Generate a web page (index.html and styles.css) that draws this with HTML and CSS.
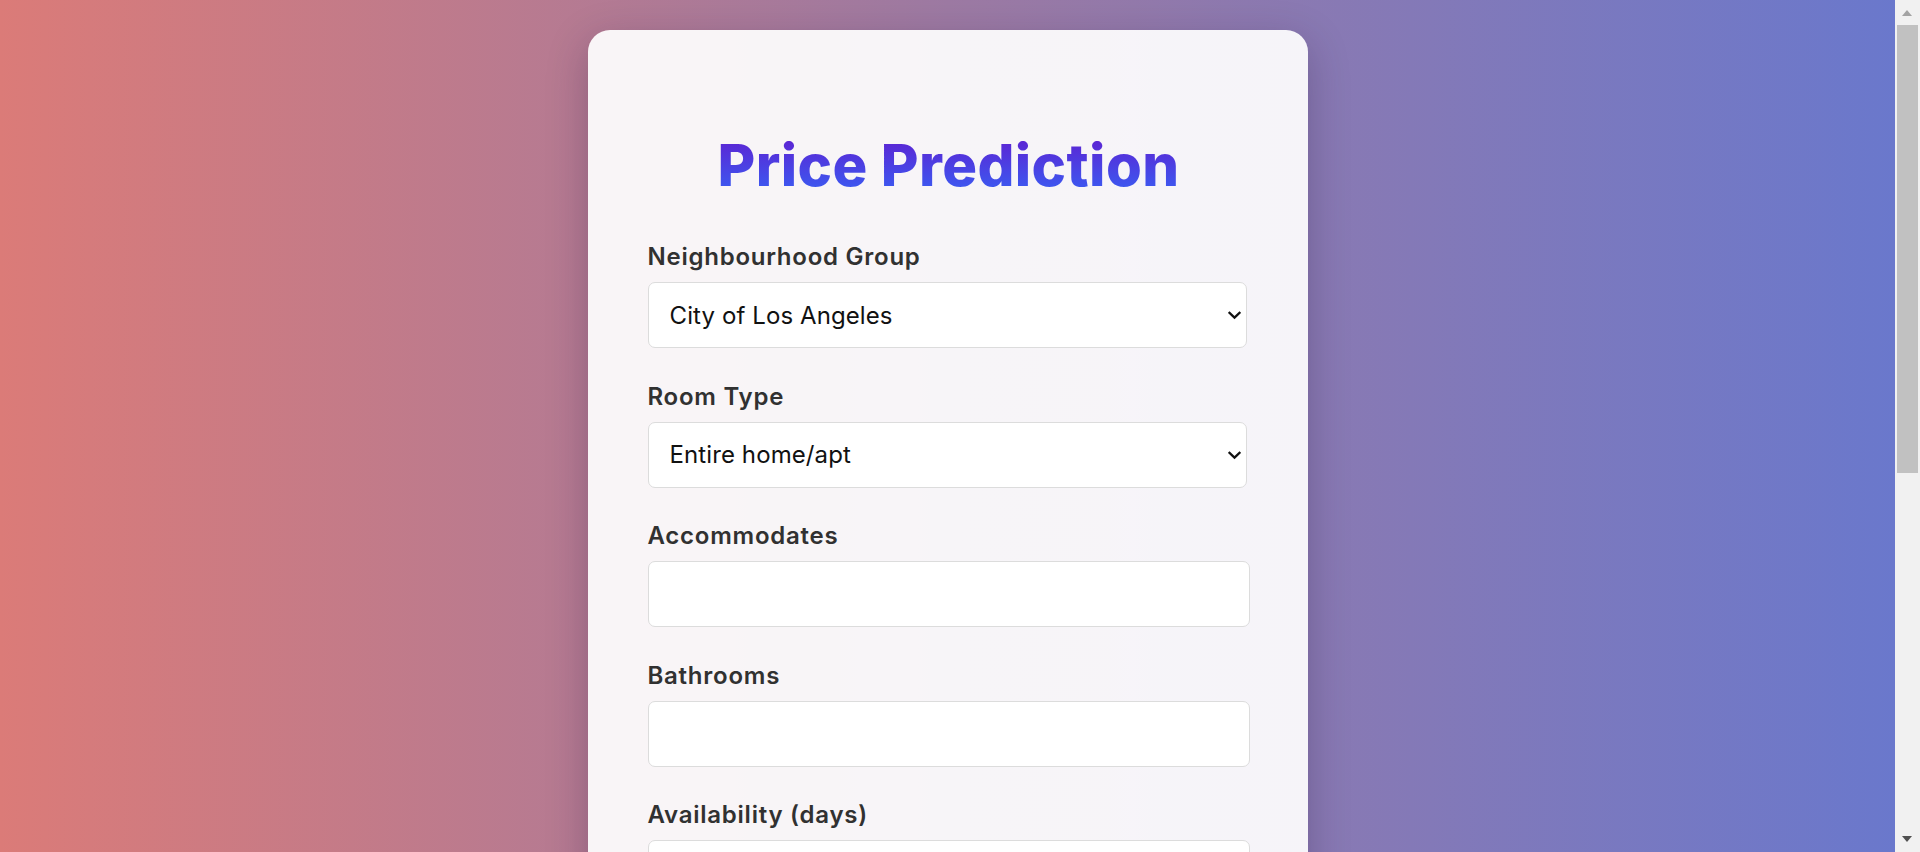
FILE: index.html
```html
<!DOCTYPE html>
<html lang="en">
<head>
<meta charset="utf-8">
<title>Price Prediction</title>
<link rel="stylesheet" href="styles.css">
</head>
<body>
<main class="card">
  <h1 class="title">Price Prediction</h1>
  <form class="form">
    <div class="field">
      <label class="label" for="ng">Neighbourhood Group</label>
      <div class="select-wrap">
        <select class="control select" id="ng">
          <option>City of Los Angeles</option>
          <option>Other Cities</option>
          <option>Unincorporated Areas</option>
        </select>
        <svg class="chevron" width="13" height="9" viewBox="0 0 13 9" aria-hidden="true"><path d="M1.5 1.8 L6.5 6.6 L11.5 1.8" fill="none" stroke="#111" stroke-width="2.3" stroke-linecap="square"/></svg>
      </div>
    </div>
    <div class="field">
      <label class="label" for="rt">Room Type</label>
      <div class="select-wrap">
        <select class="control select" id="rt">
          <option>Entire home/apt</option>
          <option>Private room</option>
          <option>Shared room</option>
          <option>Hotel room</option>
        </select>
        <svg class="chevron" width="13" height="9" viewBox="0 0 13 9" aria-hidden="true"><path d="M1.5 1.8 L6.5 6.6 L11.5 1.8" fill="none" stroke="#111" stroke-width="2.3" stroke-linecap="square"/></svg>
      </div>
    </div>
    <div class="field">
      <label class="label" for="acc">Accommodates</label>
      <input class="control" id="acc" type="number">
    </div>
    <div class="field">
      <label class="label" for="bath">Bathrooms</label>
      <input class="control" id="bath" type="number">
    </div>
    <div class="field">
      <label class="label" for="avail">Availability (days)</label>
      <input class="control" id="avail" type="number">
    </div>
    <div class="field">
      <label class="label" for="beds">Bedrooms</label>
      <input class="control" id="beds" type="number">
    </div>
    <div class="field">
      <label class="label" for="bd">Beds</label>
      <input class="control" id="bd" type="number">
    </div>
    <div class="field">
      <label class="label" for="mn">Minimum Nights</label>
      <input class="control" id="mn" type="number">
    </div>
    <div class="field">
      <label class="label" for="nr">Number of Reviews</label>
      <input class="control" id="nr" type="number">
    </div>
    <div class="field">
      <label class="label" for="rs">Review Score</label>
      <input class="control" id="rs" type="number">
    </div>
    <div class="field">
      <label class="label" for="rpm">Reviews per Month</label>
      <input class="control" id="rpm" type="number">
    </div>
    <div class="field">
      <label class="label" for="hl">Host Listings Count</label>
      <input class="control" id="hl" type="number">
    </div>
    <div class="field">
      <label class="label" for="lat">Latitude</label>
      <input class="control" id="lat" type="number">
    </div>
    <button class="btn" type="button">Predict Price</button>
  </form>
</main>
<div class="scrollbar" aria-hidden="true">
  <span class="sb-up"></span>
  <span class="sb-thumb"></span>
  <span class="sb-down"></span>
</div>
</body>
</html>
```

FILE: styles.css
```css
* { box-sizing: border-box; }

html {
  margin: 0;
  padding: 0;
  background: #f1f1f1;
}

body {
  margin: 0 25px 0 0;
  padding: 30px 0;
  background: linear-gradient(to right, #db7b78 0%, #9d7aa3 50%, #6a78cc 100%);
  font-family: "Inter", "Liberation Sans", sans-serif;
  display: flex;
  justify-content: center;
  align-items: flex-start;
}

.card {
  width: 720px;
  background: rgba(255, 255, 255, 0.92);
  border-radius: 22px;
  padding: 100px 58px 60px 60px;
  box-shadow: 0 12px 40px rgba(40, 20, 60, 0.28);
}

.title {
  margin: 0 0 42px;
  text-align: center;
  font-size: 58px;
  font-weight: 800;
  letter-spacing: 0.4px;
  line-height: 70px;
  background: linear-gradient(to bottom, #5b26d4 15%, #3a5cf2 90%);
  -webkit-background-clip: text;
  background-clip: text;
  color: transparent;
}

.form { display: flex; flex-direction: column; gap: 33.5px; }

.field { display: flex; flex-direction: column; gap: 10px; }

.label {
  font-size: 24px;
  font-weight: 600;
  letter-spacing: 0.75px;
  color: #313131;
  line-height: 30px;
}

.control {
  width: 100%;
  height: 66px;
  border: 1px solid #dcdcdc;
  border-radius: 7px;
  background: #fff;
  font-family: "Inter", "Liberation Sans", sans-serif;
  font-size: 24px;
  color: #111;
  padding: 0 20px;
}

.select-wrap {
  position: relative;
  width: 599px;
}

.select {
  appearance: none;
  -webkit-appearance: none;
  padding-left: 21px;
  letter-spacing: 0.1px;
}

.chevron {
  position: absolute;
  right: 6px;
  top: 29px;
}

.btn {
  margin-top: 10px;
  height: 66px;
  border: 0;
  border-radius: 10px;
  font-family: "Inter", "Liberation Sans", sans-serif;
  font-size: 24px;
  font-weight: 700;
  color: #fff;
  background: linear-gradient(to right, #5b26d4, #3a5cf2);
}

.scrollbar {
  position: fixed;
  top: 0;
  right: 0;
  width: 25px;
  height: 100vh;
  background: #f1f1f1;
}

.sb-up, .sb-down {
  position: absolute;
  left: 7px;
  width: 0;
  height: 0;
  border-left: 5.5px solid transparent;
  border-right: 5.5px solid transparent;
}

.sb-up {
  top: 10px;
  border-bottom: 6px solid #a3a3a3;
}

.sb-down {
  bottom: 10px;
  border-top: 6px solid #505050;
}

.sb-thumb {
  position: absolute;
  top: 25px;
  left: 2px;
  width: 21px;
  height: 448px;
  background: #c1c1c1;
}
```
